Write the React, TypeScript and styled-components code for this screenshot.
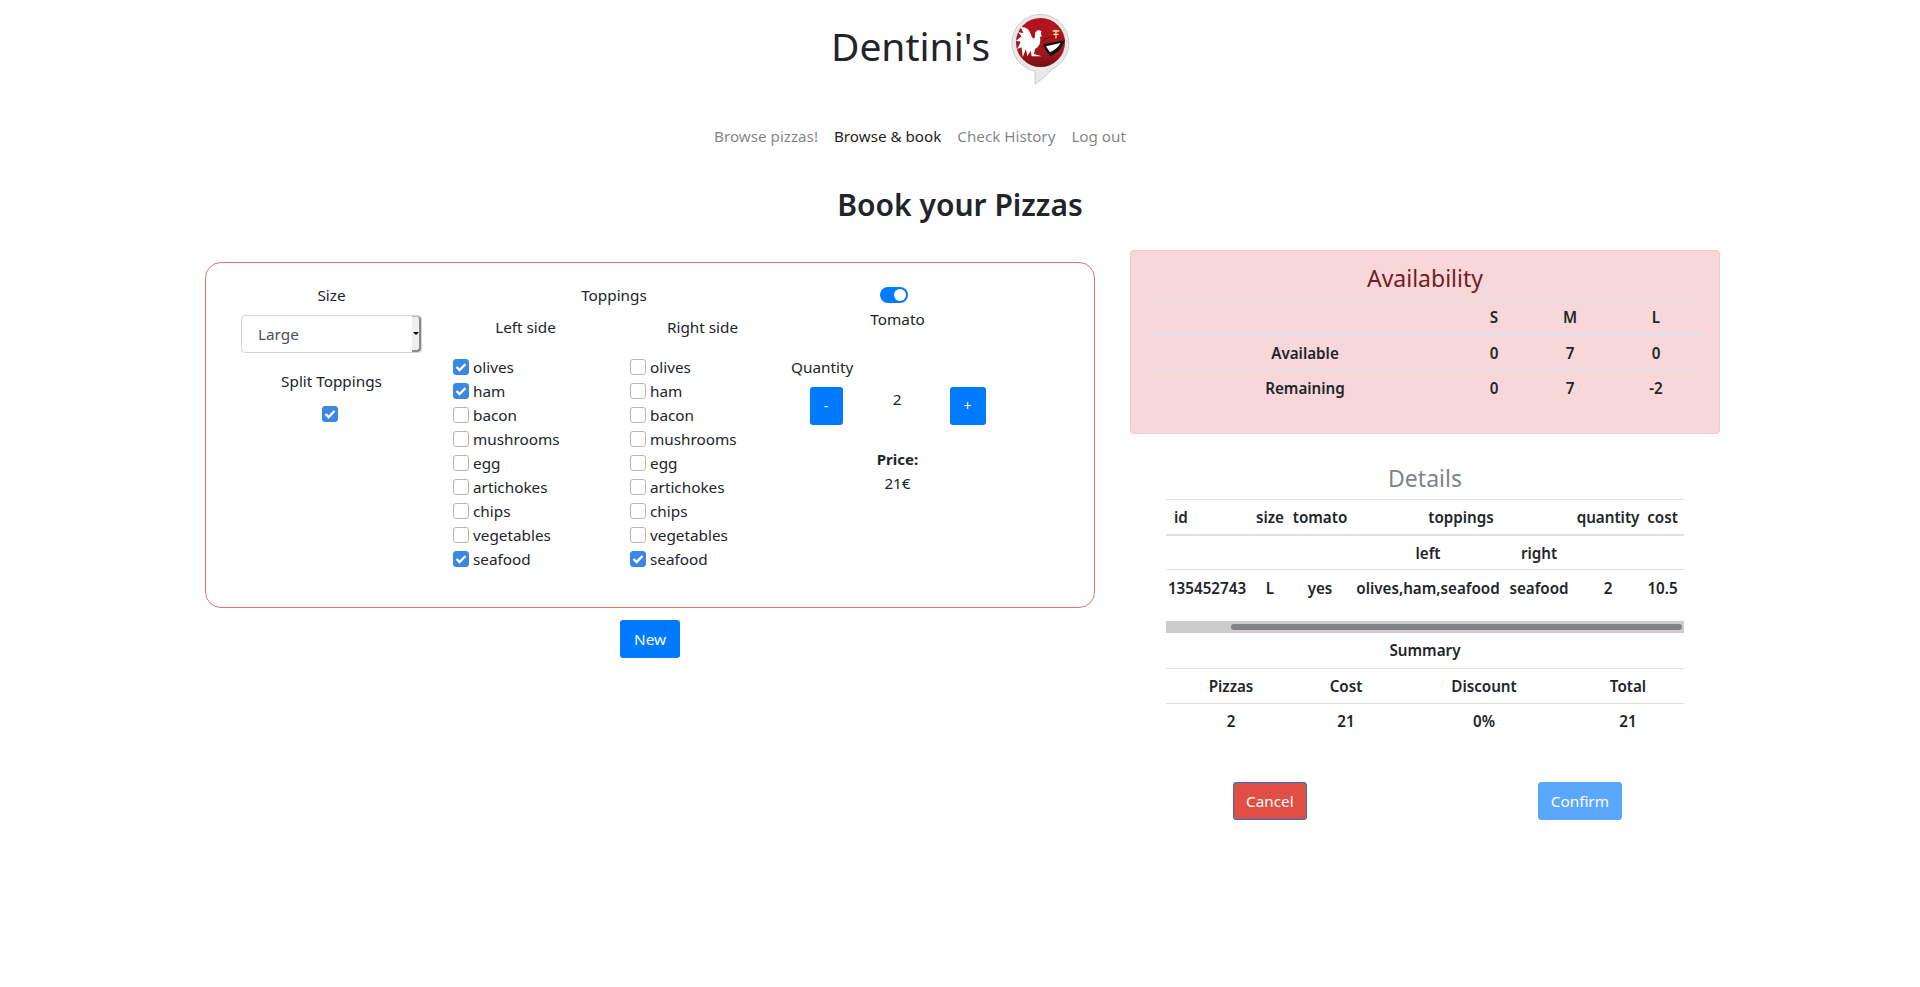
import styled, { createGlobalStyle } from "styled-components";

const GlobalStyle = createGlobalStyle`
  * {
    box-sizing: border-box;
  }

  body {
    margin: 0;
    background: #fff;
    color: #212529;
    font-family: "Noto Sans", "Open Sans", sans-serif;
    font-size: 15.3px;
    line-height: 24px;
  }
`;

const Page = styled.div`
  width: 1920px;
  min-height: 987px;
  padding-top: 15px;
`;

const Header = styled.header`
  display: flex;
  justify-content: center;
  align-items: center;
  gap: 21px;
  height: 70px;
  padding-right: 18px;
`;

const Brand = styled.h1`
  margin: -8px 0 0;
  font-size: 39px;
  font-weight: 400;
  line-height: 48px;
`;

const Nav = styled.nav`
  display: flex;
  justify-content: center;
  margin-top: 31px;
  padding-right: 80px;
`;

const NavLink = styled.a<{ $active?: boolean }>`
  padding: 8px;
  color: ${(props) => (props.$active ? "rgba(0, 0, 0, 0.9)" : "rgba(0, 0, 0, 0.5)")};
  font-size: 15.2px;
`;

const Heading = styled.h2`
  margin: 30px 0 0;
  font-size: 30px;
  font-weight: 600;
  line-height: 38px;
  text-align: center;
`;

const Columns = styled.main`
  display: grid;
  grid-template-columns: 890px 590px;
  column-gap: 35px;
  margin-top: 26px;
  padding-left: 205px;
`;

const LeftColumn = styled.section`
  display: flex;
  flex-direction: column;
  align-items: center;
  padding-top: 12px;
`;

const OrderCard = styled.div`
  display: flex;
  width: 100%;
  height: 346px;
  padding: 20px 0 0 35px;
  border: 1px solid #e4746c;
  border-radius: 16px;
`;

const SizeColumn = styled.div`
  display: flex;
  flex-direction: column;
  align-items: center;
  width: 181px;
  flex: none;
`;

const SizeSelect = styled.div`
  display: flex;
  align-items: stretch;
  width: 100%;
  height: 38px;
  margin-top: 8px;
  padding-left: 16px;
  border: 1px solid #ced4da;
  border-radius: 4px;
  color: #495057;
  line-height: 36px;
`;

const SelectValue = styled.span`
  flex: 1;
`;

const SelectArrow = styled.span`
  display: flex;
  align-items: center;
  justify-content: center;
  width: 9px;
  background: #efefef;
  border-right: 2px solid #8a8a8a;
  border-top: 1px solid #bbb;
  border-bottom: 2px solid #8a8a8a;
  border-radius: 0 4px 4px 0;

  &::after {
    content: "";
    border-left: 3px solid transparent;
    border-right: 3px solid transparent;
    border-top: 3px solid #000;
  }
`;

const SplitLabel = styled.div`
  margin-top: 16px;
`;

const SplitBox = styled.div`
  display: flex;
  margin-top: 13px;
  margin-left: -3px;
`;

const ToppingsColumn = styled.div`
  width: 354px;
  margin-left: 15px;
  flex: none;
  text-align: center;
`;

const ToppingsSides = styled.div`
  display: grid;
  grid-template-columns: 1fr 1fr;
  margin-top: 8px;
`;

const CheckList = styled.div`
  display: flex;
  flex-direction: column;
  margin-top: 16px;
  padding-left: 16px;
`;

const CheckRow = styled.label`
  display: flex;
  align-items: center;
  gap: 4px;
  height: 24px;
  text-align: left;
`;

const Box = styled.span<{ $checked?: boolean }>`
  display: flex;
  align-items: center;
  justify-content: center;
  width: 16px;
  height: 16px;
  flex: none;
  border: 1px solid ${(props) => (props.$checked ? "#3b87e4" : "#bdb5ad")};
  border-radius: 3px;
  background: ${(props) => (props.$checked ? "#3b87e4" : "#fff")};
`;

const ExtrasColumn = styled.div`
  display: flex;
  flex-direction: column;
  align-items: center;
  width: 213px;
  flex: none;
  padding-top: 4px;
`;

const Toggle = styled.span`
  display: flex;
  justify-content: flex-end;
  align-items: center;
  width: 28px;
  height: 16px;
  margin: 0 0 4px -8px;
  padding-right: 2px;
  border-radius: 8px;
  background: #007bff;

  &::after {
    content: "";
    width: 12px;
    height: 12px;
    border-radius: 50%;
    background: #fff;
  }
`;

const QuantityLabel = styled.div`
  align-self: flex-start;
  margin: 24px 0 0;
`;

const QuantityRow = styled.div`
  display: grid;
  grid-template-columns: 33px 1fr 36px;
  width: 176px;
  margin-top: 8px;
  text-align: center;
`;

const QuantityValue = styled.div`
  padding-left: 2px;
`;

const StepButton = styled.button`
  height: 38px;
  padding: 0;
  border: 0;
  border-radius: 3px;
  background: #007bff;
  color: #fff;
  font: inherit;
  font-size: 14px;
`;

const PriceLabel = styled.div`
  margin-top: 22px;
  font-weight: 700;
  font-size: 15px;
`;

const NewButton = styled.button`
  width: 60px;
  height: 38px;
  margin-top: 12px;
  border: 0;
  border-radius: 3px;
  background: #007bff;
  color: #fff;
  font: inherit;
`;

const RightColumn = styled.aside`
  display: flex;
  flex-direction: column;
`;

const AlertPanel = styled.div`
  height: 184px;
  padding: 13px 19px;
  border: 1px solid #f5c6cb;
  border-radius: 4px;
  background: #f8d7da;
`;

const PanelTitle = styled.h4<{ $muted?: boolean }>`
  margin: 0;
  padding: 0 0 6px;
  color: ${(props) => (props.$muted ? "#7f8488" : "#721c24")};
  font-size: 23px;
  font-weight: 400;
  line-height: 29px;
  text-align: center;
`;

const DataTable = styled.table`
  width: 100%;
  border-collapse: collapse;
  table-layout: fixed;
  font-size: 15.2px;
  font-weight: 600;
  line-height: 24px;
  text-align: center;
`;

const Cell = styled.td<{ $trim?: number }>`
  height: 35px;
  padding: 1px ${(props) => props.$trim ?? 0}px 0 0;
  border-top: 1px solid #dee2e6;
  white-space: nowrap;
`;

const HeadCell = styled.th<{ $left?: boolean; $nudge?: number }>`
  height: 35px;
  padding: 1px ${(props) => (props.$nudge && props.$nudge < 0 ? -props.$nudge : 0)}px 0
    ${(props) => (props.$left ? 8 : props.$nudge && props.$nudge > 0 ? props.$nudge : 0)}px;
  border-top: 1px solid #dee2e6;
  border-bottom: 2px solid #dee2e6;
  font-weight: 600;
  white-space: nowrap;
  text-align: ${(props) => (props.$left ? "left" : "center")};
`;

const DetailsBlock = styled.div`
  margin: 30px 36px 0 36px;
`;

const ScrollTrack = styled.div`
  display: flex;
  align-items: center;
  justify-content: flex-end;
  height: 12px;
  margin-top: 16px;
  padding-right: 2px;
  background: #ccc;
`;

const ScrollThumb = styled.div`
  width: 451px;
  height: 6px;
  border-radius: 3px;
  background: #7f8487;
`;

const SummaryTitle = styled.div`
  height: 35px;
  font-size: 15.2px;
  font-weight: 600;
  line-height: 35px;
  text-align: center;
`;

const ActionRow = styled.div`
  display: flex;
  justify-content: space-between;
  margin-top: 44px;
  padding: 0 98px 0 103px;
`;

const ActionButton = styled.button<{ $danger?: boolean }>`
  height: 38px;
  padding: 0 12px;
  border: 1px solid ${(props) => (props.$danger ? "#1a73e8" : "#5aa7fe")};
  border-radius: 3px;
  background: ${(props) => (props.$danger ? "#e14e43" : "#5aa7fe")};
  color: #fff;
  font: inherit;
`;

const TOPPINGS = [
  "olives",
  "ham",
  "bacon",
  "mushrooms",
  "egg",
  "artichokes",
  "chips",
  "vegetables",
  "seafood",
];

const LEFT = ["olives", "ham", "seafood"];
const RIGHT = ["seafood"];

const Tick = () => (
  <svg width="12" height="10" viewBox="0 0 12 10" aria-hidden="true">
    <path d="M1.5 5 L4.6 8 L10.5 2" fill="none" stroke="#fff" strokeWidth="2.4" />
  </svg>
);

const CheckBox = ({ checked }: { checked?: boolean }) => (
  <Box $checked={checked}>{checked && <Tick />}</Box>
);

const Logo = () => (
  <svg width="60" height="74" viewBox="0 0 60 74" aria-label="Dentini's logo">
    <defs>
      <linearGradient id="badge" x1="0" y1="0" x2="0" y2="1">
        <stop offset="0" stopColor="#b3141f" />
        <stop offset="0.7" stopColor="#a8141c" />
        <stop offset="1" stopColor="#6f1015" />
      </linearGradient>
    </defs>
    <path
      d="M24 58 A28.5 28.5 0 1 1 41 56 Q33 66 24 71 Z"
      fill="#e8e8e8"
      stroke="#c4c4c4"
      strokeWidth="0.8"
    />
    <circle cx="29.5" cy="29.5" r="24.5" fill="url(#badge)" />
    <g transform="translate(-231 -14) scale(0.3333)">
      <path
        d="M722 84 Q745 82 752 105 Q758 122 764 118 L766 100 L774 93 L784 96 L783 106 L786 112 L780 114 Q785 140 765 150 L762 165 L785 172 L755 172 L752 155 L742 172 L738 150 L728 175 L725 145 L712 150 L722 128 L708 125 L725 112 L714 100 L730 102 Z"
        fill="#fff"
      />
      <path
        d="M786 128 Q820 100 855 124"
        fill="none"
        stroke="#111"
        strokeWidth="3"
        strokeDasharray="4 4"
      />
      <path d="M790 136 L854 124 Q846 156 812 172 Q796 158 790 136 Z" fill="#111" />
      <path d="M798 142 L842 132 Q832 150 810 160 Z" fill="#fff" />
      <path d="M818 96 H838 M828 92 V118 M820 106 H836" stroke="#f4e48a" strokeWidth="4" fill="none" />
    </g>
  </svg>
);

const App = () => {
  return (
    <Page>
      <GlobalStyle />
      <Header>
        <Brand>Dentini's</Brand>
        <Logo />
      </Header>
      <Nav>
        <NavLink>Browse pizzas!</NavLink>
        <NavLink $active>Browse &amp; book</NavLink>
        <NavLink>Check History</NavLink>
        <NavLink>Log out</NavLink>
      </Nav>
      <Heading>Book your Pizzas</Heading>
      <Columns>
        <LeftColumn>
          <OrderCard>
            <SizeColumn>
              <div>Size</div>
              <SizeSelect>
                <SelectValue>Large</SelectValue>
                <SelectArrow />
              </SizeSelect>
              <SplitLabel>Split Toppings</SplitLabel>
              <SplitBox>
                <CheckBox checked />
              </SplitBox>
            </SizeColumn>
            <ToppingsColumn>
              <div>Toppings</div>
              <ToppingsSides>
                <div>
                  <div>Left side</div>
                  <CheckList>
                    {TOPPINGS.map((name) => (
                      <CheckRow key={name}>
                        <CheckBox checked={LEFT.includes(name)} />
                        {name}
                      </CheckRow>
                    ))}
                  </CheckList>
                </div>
                <div>
                  <div>Right side</div>
                  <CheckList>
                    {TOPPINGS.map((name) => (
                      <CheckRow key={name}>
                        <CheckBox checked={RIGHT.includes(name)} />
                        {name}
                      </CheckRow>
                    ))}
                  </CheckList>
                </div>
              </ToppingsSides>
            </ToppingsColumn>
            <ExtrasColumn>
              <Toggle />
              <div>Tomato</div>
              <QuantityLabel>Quantity</QuantityLabel>
              <QuantityRow>
                <StepButton>-</StepButton>
                <QuantityValue>2</QuantityValue>
                <StepButton>+</StepButton>
              </QuantityRow>
              <PriceLabel>Price:</PriceLabel>
              <div>21€</div>
            </ExtrasColumn>
          </OrderCard>
          <NewButton>New</NewButton>
        </LeftColumn>
        <RightColumn>
          <AlertPanel>
            <PanelTitle>Availability</PanelTitle>
            <DataTable>
              <colgroup>
                <col width="310" />
                <col width="68" />
                <col width="84" />
                <col width="88" />
              </colgroup>
              <thead>
                <tr>
                  <HeadCell />
                  <HeadCell>S</HeadCell>
                  <HeadCell>M</HeadCell>
                  <HeadCell>L</HeadCell>
                </tr>
              </thead>
              <tbody>
                <tr>
                  <Cell>Available</Cell>
                  <Cell>0</Cell>
                  <Cell>7</Cell>
                  <Cell>0</Cell>
                </tr>
                <tr>
                  <Cell>Remaining</Cell>
                  <Cell>0</Cell>
                  <Cell>7</Cell>
                  <Cell>-2</Cell>
                </tr>
              </tbody>
            </DataTable>
          </AlertPanel>
          <DetailsBlock>
            <PanelTitle $muted>Details</PanelTitle>
            <DataTable>
              <colgroup>
                <col width="82" />
                <col width="44" />
                <col width="56" />
                <col width="160" />
                <col width="62" />
                <col width="76" />
                <col width="38" />
              </colgroup>
              <thead>
                <tr>
                  <HeadCell $left>id</HeadCell>
                  <HeadCell>size</HeadCell>
                  <HeadCell>tomato</HeadCell>
                  <HeadCell colSpan={2} $nudge={4}>
                    toppings
                  </HeadCell>
                  <HeadCell>quantity</HeadCell>
                  <HeadCell $nudge={-5}>cost</HeadCell>
                </tr>
              </thead>
              <tbody>
                <tr>
                  <Cell />
                  <Cell />
                  <Cell />
                  <Cell>left</Cell>
                  <Cell>right</Cell>
                  <Cell />
                  <Cell />
                </tr>
                <tr>
                  <Cell>135452743</Cell>
                  <Cell>L</Cell>
                  <Cell>yes</Cell>
                  <Cell>olives,ham,seafood</Cell>
                  <Cell>seafood</Cell>
                  <Cell>2</Cell>
                  <Cell $trim={5}>10.5</Cell>
                </tr>
              </tbody>
            </DataTable>
            <ScrollTrack>
              <ScrollThumb />
            </ScrollTrack>
            <SummaryTitle>Summary</SummaryTitle>
            <DataTable>
              <colgroup>
                <col width="130" />
                <col width="100" />
                <col width="176" />
                <col width="112" />
              </colgroup>
              <tbody>
                <tr>
                  <Cell>Pizzas</Cell>
                  <Cell>Cost</Cell>
                  <Cell>Discount</Cell>
                  <Cell>Total</Cell>
                </tr>
                <tr>
                  <Cell>2</Cell>
                  <Cell>21</Cell>
                  <Cell>0%</Cell>
                  <Cell>21</Cell>
                </tr>
              </tbody>
            </DataTable>
          </DetailsBlock>
          <ActionRow>
            <ActionButton $danger>Cancel</ActionButton>
            <ActionButton>Confirm</ActionButton>
          </ActionRow>
        </RightColumn>
      </Columns>
    </Page>
  );
};

export default App;
